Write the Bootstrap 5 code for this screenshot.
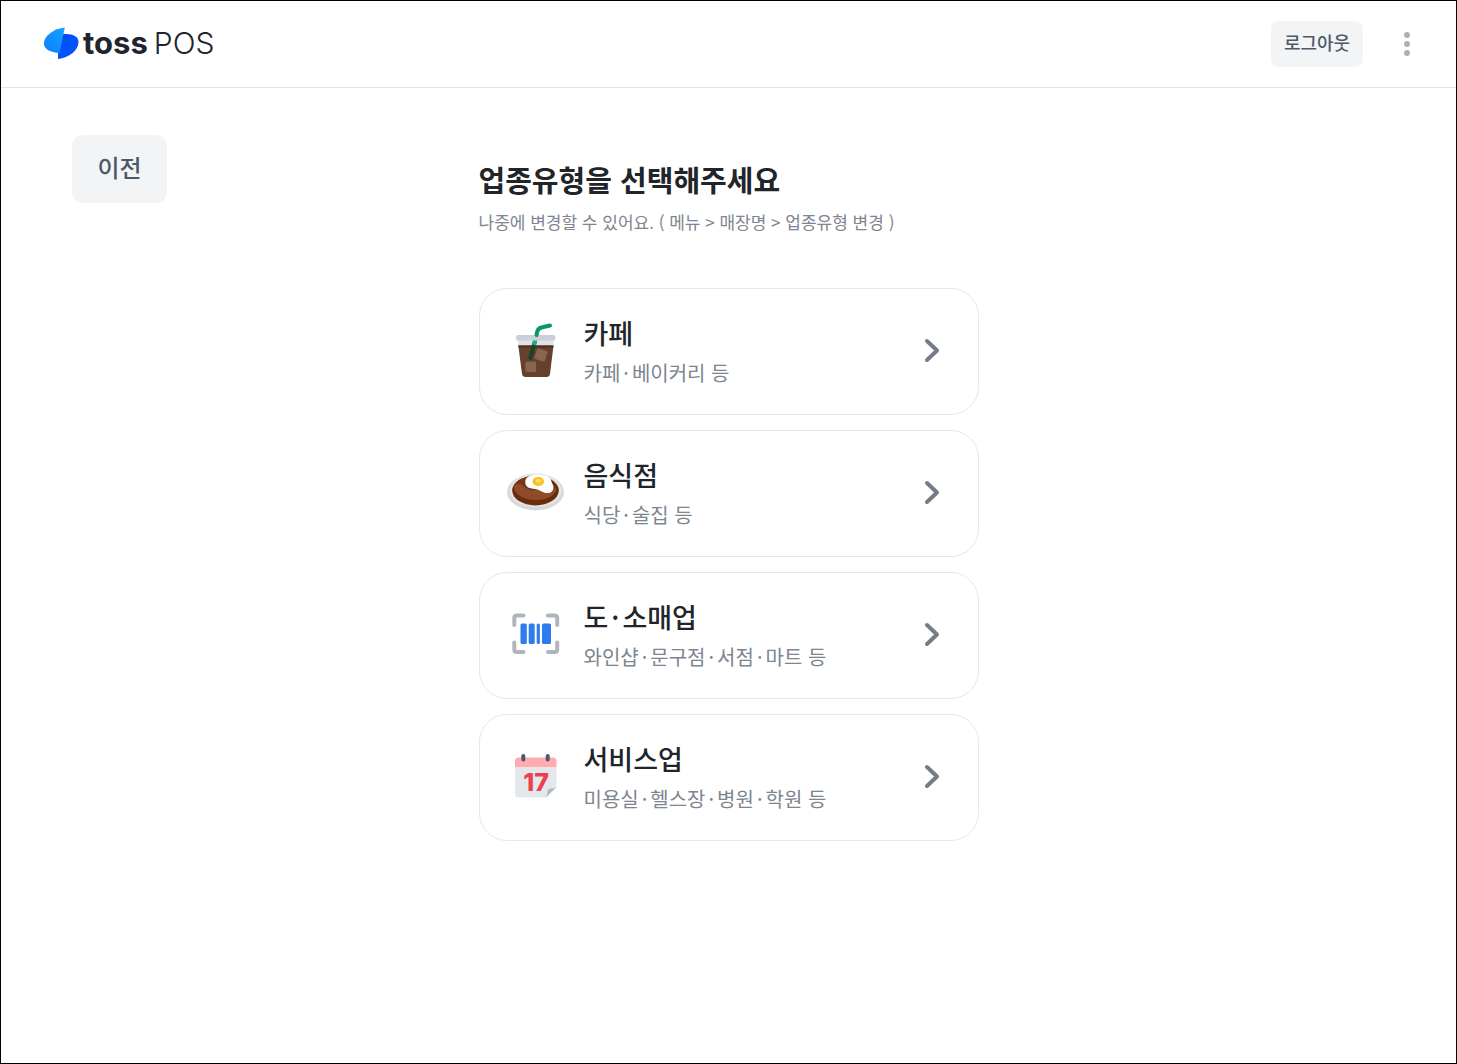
<!DOCTYPE html>
<html lang="ko">
<head>
<meta charset="utf-8">
<meta name="viewport" content="width=device-width, initial-scale=1">
<title>toss POS</title>
<link href="https://cdn.jsdelivr.net/npm/bootstrap@5.3.0/dist/css/bootstrap.min.css" rel="stylesheet">
<style>
  body { font-family: "Noto Sans CJK KR", sans-serif; color: #212529; background: #fff; border: 1px solid #000; }
  .topbar { height: 87px; padding: 0 33px 0 42px; border-bottom: 1px solid #e3e4e6; }
  .brand { gap: 4px; padding-bottom: 2px; color: #20242e; font-family: Inter, sans-serif; font-size: 30px; line-height: 36px; text-decoration: none; }
  .brand-name { font-size: 31px; font-weight: 700; }
  .brand-product { font-weight: 300; margin-left: 6px; }
  .btn-soft { --bs-btn-bg: #f2f4f6; --bs-btn-color: #4e5968; --bs-btn-hover-bg: #e5e8eb; --bs-btn-hover-color: #4e5968; --bs-btn-border-width: 0; font-weight: 500; }
  .btn-logout { width: 92px; height: 46px; padding: 0 0 4px; font-size: 18px; border-radius: 8px; }
  .btn-back { width: 95px; height: 68px; padding: 0 0 4px; font-size: 24px; border-radius: 11px; }
  .btn-more { width: 32px; height: 46px; line-height: 0; }
  .topbar-actions { gap: 28px; }
  .page { display: grid; grid-template-columns: 1fr minmax(0, 500px) 1fr; padding-top: 47px; }
  .page-side { padding-left: 71px; }
  .picker { padding-top: 20px; }
  .picker-title { font-size: 29px; line-height: 48px; font-weight: 700; margin: 0; }
  .picker-note { font-size: 17px; line-height: 32px; color: #7d858f; margin: 3px 0 50px; }
  .type-list { gap: 15px; }
  .type-card { height: 127px; padding: 0 33px 0 26px; border: 1px solid #e6e7e9; border-radius: 28px; background: #fff; color: inherit; }
  .type-card svg { margin-bottom: 1px; }
  .type-text { margin-left: 18px; padding-top: 2px; }
  .type-name { font-size: 27px; line-height: 40px; font-weight: 500; }
  .type-desc { font-size: 20px; line-height: 40px; color: #7d858f; }
  .type-text i { font-style: normal; margin: 0 3px; }
  svg { flex: none; }
</style>
<script src="https://cdn.jsdelivr.net/npm/bootstrap@5.3.0/dist/js/bootstrap.bundle.min.js"></script>
</head>
<body class="min-vh-100">
<header class="topbar d-flex align-items-center justify-content-between">
  <a class="brand d-flex align-items-center" href="#">
    <svg width="36" height="34" viewBox="0 0 36 34" aria-hidden="true">
      <defs>
        <linearGradient id="lt" x1="1" y1="0" x2="0" y2="1"><stop offset="0" stop-color="#12a5ff"/><stop offset="1" stop-color="#0d7cff"/></linearGradient>
        <linearGradient id="rt" x1="0" y1="0" x2="1" y2="1"><stop offset="0" stop-color="#0a3fe0"/><stop offset=".4" stop-color="#0054ff"/><stop offset="1" stop-color="#0b50f5"/></linearGradient>
      </defs>
      <path fill="url(#rt)" d="M19 8.300C29 7 35.500 10.500 35.500 16C35.500 24 26 32 15 33L15 22Z"/>
      <path fill="url(#lt)" d="M21.800 1.500L16.500 27C7 26.500 1 23 1 17.500C1 9.500 11 2.500 21.800 1.500Z"/>
    </svg>
    <span><span class="brand-name">toss</span><span class="brand-product">POS</span></span>
  </a>
  <div class="topbar-actions d-flex align-items-center">
    <button type="button" class="btn btn-soft btn-logout">로그아웃</button>
    <button type="button" class="btn-more border-0 bg-transparent p-0" aria-label="더보기">
      <svg width="8" height="26" viewBox="0 0 8 26" fill="#adb1b5"><circle cx="4" cy="4" r="3"/><circle cx="4" cy="13" r="3"/><circle cx="4" cy="22" r="3"/></svg>
    </button>
  </div>
</header>
<main class="page">
  <div class="page-side"><button type="button" class="btn btn-soft btn-back">이전</button></div>
  <section class="picker">
    <h1 class="picker-title">업종유형을 선택해주세요</h1>
    <p class="picker-note">나중에 변경할 수 있어요. ( 메뉴 &gt; 매장명 &gt; 업종유형 변경 )</p>
    <div class="type-list d-flex flex-column">
      <button type="button" class="type-card d-flex align-items-center text-start">
        <svg width="60" height="60" viewBox="0 0 60 60" aria-hidden="true">
          <path fill="#dfe2e6" d="M12 18H48L47 26H13Z"/>
          <path fill="#65412c" d="M12.300 24.500H47.500L44 53Q43.700 56 40.500 56H19.500Q16.500 56 16 53Z"/>
          <path fill="#4f301f" d="M12.300 24.500H47.500L47.300 26.500H12.500Z"/>
          <path d="M29 20L24.500 37" stroke="#17432a" stroke-width="4" stroke-linecap="round"/>
          <path d="M29.500 18L28 24" stroke="#12b577" stroke-width="4"/>
          <rect x="29.500" y="28.500" width="11" height="11" rx="1.500" fill="#8b6550" transform="rotate(18 35 34)"/>
          <rect x="19.500" y="40.500" width="10.500" height="10.500" rx="1.500" fill="#8b6550"/>
          <rect x="10" y="14" width="39.500" height="5.500" rx="2" fill="#ccd0d5"/>
          <path d="M30.500 14L31.300 10.500Q32 7.500 35.500 6.500L44 4.500" fill="none" stroke="#0a9765" stroke-width="4" stroke-linecap="round" stroke-linejoin="round"/>
        </svg>
        <span class="type-text d-flex flex-column"><span class="type-name">카페</span><span class="type-desc">카페<i>·</i>베이커리 등</span></span>
        <svg class="ms-auto" width="24" height="28" viewBox="0 0 24 28" fill="none" stroke="#747c87" stroke-width="4" stroke-linecap="round" stroke-linejoin="round" aria-hidden="true"><path d="M6 4L16 13.500L6 23"/></svg>
      </button>
      <button type="button" class="type-card d-flex align-items-center text-start">
        <svg width="60" height="60" viewBox="0 0 60 60" aria-hidden="true">
          <ellipse cx="29.500" cy="29" rx="28.500" ry="18.500" fill="#d8d9db"/>
          <ellipse cx="29.500" cy="27.500" rx="26" ry="16.500" fill="#e4e5e7"/>
          <ellipse cx="29.500" cy="27.500" rx="23.300" ry="15" fill="#6a2c0d"/>
          <path fill="#8f4a28" d="M8 23C10 18 15 15 21 14L30 24L46 29L50 24C52 31 42 37 30 37C17 37 7 30 8 23Z"/>
          <path fill="#6a2c0d" d="M8 23C12 19 16 22 20 25C24 28 28 28 31 26L26 20L20 15C13 16 9 19 8 23Z" opacity=".65"/>
          <path fill="#fff" d="M19.500 21C18 14 24 11.500 32 11.500C40 11.500 44.500 14 45.500 18.500C46 21 48 22.500 47.500 25.500C47 29.500 42 31 38 29.500C34.500 28 33 26.500 29 26C24 25.500 20.500 24.500 19.500 21Z"/>
          <ellipse cx="32.300" cy="18.500" rx="5.800" ry="4.600" fill="#f9c21c"/>
          <ellipse cx="32.300" cy="17.800" rx="2.800" ry="1.800" fill="#fce27a"/>
        </svg>
        <span class="type-text d-flex flex-column"><span class="type-name">음식점</span><span class="type-desc">식당<i>·</i>술집 등</span></span>
        <svg class="ms-auto" width="24" height="28" viewBox="0 0 24 28" fill="none" stroke="#747c87" stroke-width="4" stroke-linecap="round" stroke-linejoin="round" aria-hidden="true"><path d="M6 4L16 13.500L6 23"/></svg>
      </button>
      <button type="button" class="type-card d-flex align-items-center text-start">
        <svg width="60" height="60" viewBox="0 0 60 60" aria-hidden="true">
          <path d="M17.500 10.500H11Q8.300 10.500 8.300 13V20M42 10.500H48.500Q51.200 10.500 51.200 13V20M8.300 37.500V44.500Q8.300 47 11 47H17.500M51.200 37.500V44.500Q51.200 47 48.500 47H42" fill="none" stroke="#b1b4b8" stroke-width="4" stroke-linecap="round"/>
          <g fill="#2f7bf0"><rect x="14.500" y="18.500" width="6.300" height="20.500" rx="1.500"/><rect x="22.700" y="18.500" width="6" height="20.500" rx="1.500"/><rect x="30.700" y="18.500" width="3.200" height="20.500" rx="1.500"/><rect x="36" y="18.500" width="9" height="20.500" rx="1.500"/></g>
        </svg>
        <span class="type-text d-flex flex-column"><span class="type-name">도<i>·</i>소매업</span><span class="type-desc">와인샵<i>·</i>문구점<i>·</i>서점<i>·</i>마트 등</span></span>
        <svg class="ms-auto" width="24" height="28" viewBox="0 0 24 28" fill="none" stroke="#747c87" stroke-width="4" stroke-linecap="round" stroke-linejoin="round" aria-hidden="true"><path d="M6 4L16 13.500L6 23"/></svg>
      </button>
      <button type="button" class="type-card d-flex align-items-center text-start">
        <svg width="60" height="60" viewBox="0 0 60 60" aria-hidden="true">
          <path fill="#e5e8eb" d="M9 19H50.500V40L40 50.500H12.500Q9 50.500 9 47Z"/>
          <path fill="#ffabb0" d="M9 20V14Q9 10.500 12.500 10.500H47Q50.500 10.500 50.500 14V20Z"/>
          <path fill="#b3b9c1" d="M50.500 40L40 50.500Q41.500 47 41.500 44.500Q41.500 41.500 44.500 41.500Q47.500 41.500 50.500 40Z"/>
          <path d="M17.300 9V12.500M41.700 9V12.500" stroke="#4e5968" stroke-width="4" stroke-linecap="round"/>
          <text x="30" y="44" text-anchor="middle" font-family="Inter, sans-serif" font-weight="800" font-size="25" fill="#ec3f50">17</text>
        </svg>
        <span class="type-text d-flex flex-column"><span class="type-name">서비스업</span><span class="type-desc">미용실<i>·</i>헬스장<i>·</i>병원<i>·</i>학원 등</span></span>
        <svg class="ms-auto" width="24" height="28" viewBox="0 0 24 28" fill="none" stroke="#747c87" stroke-width="4" stroke-linecap="round" stroke-linejoin="round" aria-hidden="true"><path d="M6 4L16 13.500L6 23"/></svg>
      </button>
    </div>
  </section>
  <div></div>
</main>
</body>
</html>
